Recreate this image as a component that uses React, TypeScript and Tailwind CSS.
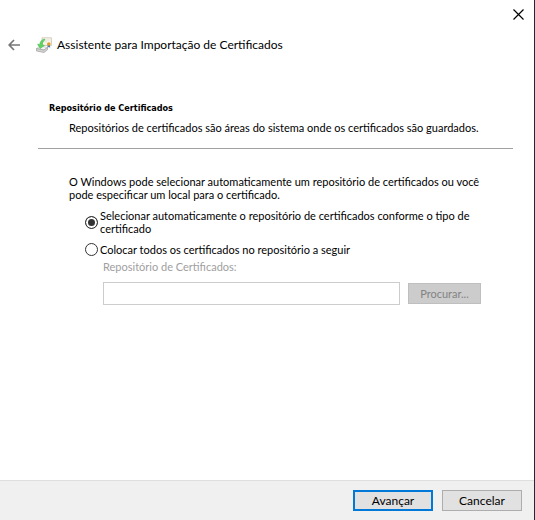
import type { ReactNode } from "react";

const BackIcon = () => (
  <svg width="12" height="12" viewBox="0 0 12 12" fill="none" stroke="#777" strokeWidth="1.7">
    <path d="M6 1 L1.2 6 L6 11 M1.5 6 H12" />
  </svg>
);

const CloseIcon = () => (
  <svg width="11" height="11" viewBox="0 0 11 11" stroke="#000" strokeWidth="1.2">
    <path d="M0.5 0.5 L10.5 10.5 M10.5 0.5 L0.5 10.5" />
  </svg>
);

const CertificateIcon = () => (
  <svg width="16" height="16" viewBox="0 0 16 16">
    <path d="M6 0.8 H15.4 V8.5 H6 Z" fill="#f8f5ea" stroke="#c9c2ae" strokeWidth="0.8" />
    <path d="M8 3 H13.5 M8 4.8 H11" stroke="#dcdad2" strokeWidth="0.7" />
    <path d="M11.8 7 L11.4 10.8 L12.7 10 L14.2 10.8 L13.8 7 Z" fill="#4a74b8" />
    <circle cx="12.8" cy="7" r="1.8" fill="#e0a028" />
    <path d="M0.5 11.5 L4 9 L11.5 10.5 L8 13 Z" fill="#f4f4f4" stroke="#b5b5b5" strokeWidth="0.6" />
    <path d="M0.5 11.5 L8 13 L11.5 10.5 V12.8 L8 15.5 L0.5 14 Z" fill="#d2d2d2" stroke="#949494" strokeWidth="0.6" />
    <path d="M8.6 2 C5.6 2.6 4 4.8 3.8 7.4 L1.6 7.2 L4.2 11.6 L8.4 8.4 L6.4 7.9 C6.4 5.8 7 4.2 8.6 3.2 Z" fill="#5fd45f" stroke="#3fb04a" strokeWidth="0.5" />
  </svg>
);

type OptionProps = {
  id: string;
  defaultChecked?: boolean;
  children: ReactNode;
};

const Option = ({ id, defaultChecked, children }: OptionProps) => (
  <div className="flex items-center gap-0.5">
    <input
      type="radio"
      name="store"
      id={id}
      defaultChecked={defaultChecked}
      className="appearance-none shrink-0 size-[13px] rounded-full border border-[#333] bg-white checked:bg-[#333] checked:shadow-[inset_0_0_0_2px_white]"
    />
    <label htmlFor={id}>{children}</label>
  </div>
);

export default function App() {
  return (
    <div className="min-h-screen flex flex-col bg-white border-r border-[#26263a] text-black text-[11px] leading-[13px] font-['Lato',sans-serif]">
      <header>
        <div className="flex justify-end px-[9px] pt-2">
          <button type="button" aria-label="Fechar" className="p-px">
            <CloseIcon />
          </button>
        </div>
        <div className="flex items-center px-2 pt-3.5">
          <button type="button" aria-label="Voltar">
            <BackIcon />
          </button>
          <div className="ml-4 mr-[5px]">
            <CertificateIcon />
          </div>
          <h1 className="text-[12px] leading-5">
            Assistente para Importação de Certificados
          </h1>
        </div>
      </header>

      <main className="flex-1 pl-[38px] pr-[21px] pt-[47px]">
        <section className="border-b border-[#a0a0a0] pl-[11px] pb-3.5">
          <h2 className="font-bold text-[9px] font-['DejaVu_Sans_Condensed','DejaVu_Sans',sans-serif]">
            Repositório de Certificados
          </h2>
          <p className="pl-5 pt-1.5">
            Repositórios de certificados são áreas do sistema onde os certificados são guardados.
          </p>
        </section>

        <section className="pl-[31px] pt-[26px]">
          <p>
            O Windows pode selecionar automaticamente um repositório de certificados ou você
            <br />
            pode especificar um local para o certificado.
          </p>
          <div className="pl-4 pt-2 flex flex-col gap-2">
            <Option id="auto" defaultChecked>
              Selecionar automaticamente o repositório de certificados conforme o tipo de
              <br />
              certificado
            </Option>
            <Option id="manual">Colocar todos os certificados no repositório a seguir</Option>
          </div>
          <div className="pl-[34px] pr-8 pt-1">
            <label htmlFor="path" className="text-[#a0a0a0]">
              Repositório de Certificados:
            </label>
            <div className="flex items-center gap-2 pt-[9px]">
              <input
                id="path"
                type="text"
                disabled
                className="flex-1 min-w-0 h-[23px] px-1 border border-[#ccc] bg-white"
              />
              <button
                type="button"
                disabled
                className="w-[73px] h-[21px] border border-[#bfbfbf] bg-[#ccc] text-[#838383]"
              >
                Procurar...
              </button>
            </div>
          </div>
        </section>
      </main>

      <footer className="flex justify-end gap-[9px] border-t border-[#dfdfdf] bg-[#f0f0f0] px-3 py-[9px] text-[12px] leading-4">
        <button type="button" className="w-20 h-[21px] border-2 border-[#0078d7] bg-[#e1e1e1]">
          Avançar
        </button>
        <button type="button" className="w-20 h-[21px] border border-[#adadad] bg-[#e1e1e1]">
          Cancelar
        </button>
      </footer>
    </div>
  );
}
